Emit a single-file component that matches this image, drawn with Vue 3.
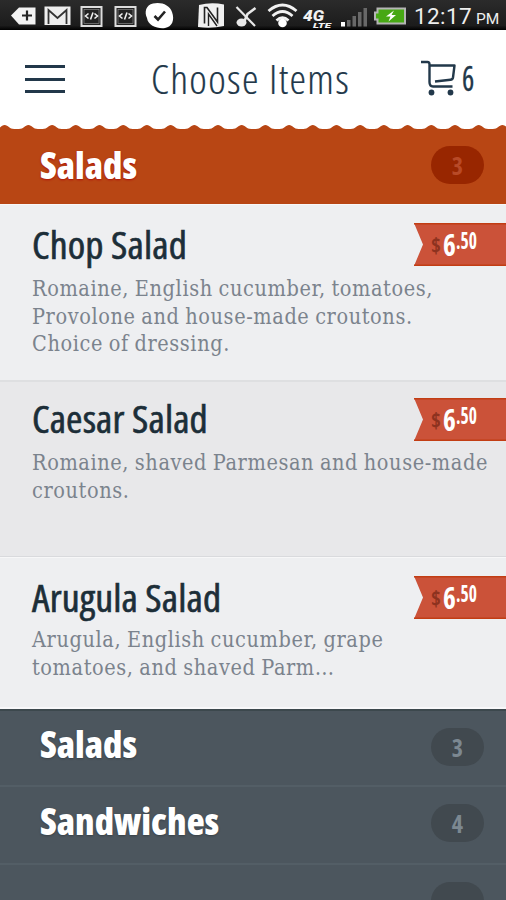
<template>
    <div class="screen">
        <div class="status-bar">
            <svg class="status-icons" viewBox="0 0 410 30" width="410" height="30" fill="none">
                <path d="M11 15.500L19 7.500H35.500V24.500H19Z" fill="#f2f2f2" />
                <path d="M22 15.500H32M27 10.500V20.500" stroke="#222" stroke-width="2.200" />
                <rect x="44.500" y="6.500" width="26" height="18.500" fill="#eee" />
                <path d="M48.500 24V10L57.500 18L66.500 10V24" stroke="#333" stroke-width="1.800" />
                <g v-for="x in [80.5, 114.5]" :key="x" :transform="`translate(${x} 6)`">
                    <rect x="1" y="1" width="20" height="19" fill="#222" stroke="#ddd" stroke-width="2" />
                    <rect x="3.500" y="3.500" width="15" height="14" stroke="#999" stroke-width="0.600" />
                    <path d="M8 7.500L5 10L8 12.500M14 7.500L17 10L14 12.500M12.500 6.500L10 13.500" stroke="#eee" stroke-width="1.600" />
                </g>
                <path d="M153 3.500C161 1.500 170 5 172 12C175 20 172 27 165 28C158 29 148 26 147 18C144 12 146 5 153 3.500Z"
                    fill="#fff" />
                <path d="M154.500 16L158 19.500L165 11.500" stroke="#222" stroke-width="2.600" />
                <path d="M199 5Q211 2 224 4.500V26Q211 29 198 27Z" fill="#f0f0f0" />
                <path d="M204.500 23.500V7.500H207L217.500 22V7.500" stroke="#222" stroke-width="1.600" />
                <path d="M208.500 26V14L217 26" stroke="#222" stroke-width="1.400" />
                <path d="M236.500 7L255 26" stroke="#e8e8e8" stroke-width="2.200" />
                <path d="M244.500 21L247.500 14L255.500 8" stroke="#e8e8e8" stroke-width="2.600" />
                <ellipse cx="241.500" cy="22.500" rx="5" ry="4" fill="#e8e8e8" />
                <g stroke="#f2f2f2" stroke-width="2.800">
                    <path d="M268.500 11Q282.500 -1 296.500 11" />
                    <path d="M272.500 16Q282.500 7 292.500 16" />
                    <path d="M276.500 20.500Q282.500 15 288.500 20.500" />
                </g>
                <circle cx="282.500" cy="23" r="4.300" fill="#fff" />
                <text x="303" y="20.500" class="net net-4g" textLength="21" lengthAdjust="spacingAndGlyphs">4G</text>
                <text x="313" y="28" class="net net-lte" textLength="18" lengthAdjust="spacingAndGlyphs">LTE</text>
                <rect x="341" y="22" width="4" height="4.500" fill="#fff" />
                <g fill="#686868">
                    <rect x="347" y="20" width="3.500" height="6.500" />
                    <rect x="352.500" y="16" width="3.500" height="10.500" />
                    <rect x="358" y="12" width="3.500" height="14.500" />
                    <rect x="363.500" y="8" width="3.500" height="18.500" />
                </g>
                <path d="M377.500 8.500H405V23.500H377.500V19.500H375V12.500H377.500Z" fill="#47a814" stroke="#b5b5b5"
                    stroke-width="2" />
                <path d="M394 10.500L386 16.500H390.500L388.500 21.500L396 15H391.500Z" fill="#fff" />
            </svg>
            <div class="clock"><span class="time">12:17</span><span class="meridiem">PM</span></div>
        </div>

        <header class="nav">
            <button class="menu-button" aria-label="Menu">
                <span></span>
                <span></span>
                <span></span>
            </button>
            <h1 class="title">Choose Items</h1>
            <div class="cart">
                <svg viewBox="0 0 36 36" width="36" height="36" fill="none" stroke="#22384a" stroke-width="2.400"
                    stroke-linejoin="round">
                    <path d="M1 2H7.500Q9.500 2 9.500 4.500V22Q9.500 26.500 13 26.500H32.500" />
                    <path d="M9.500 5.500H34.500L33 17.500Q32.700 19.500 30.500 19.700L15 21.500" />
                    <circle cx="11.500" cy="32.500" r="2.900" fill="#22384a" stroke="none" />
                    <circle cx="30.500" cy="32.500" r="2.900" fill="#22384a" stroke="none" />
                </svg>
                <span class="cart-count">{{ cartCount }}</span>
            </div>
        </header>

        <section class="category category-open">
            <svg class="scallop" width="506" height="6" viewBox="0 0 506 6">
                <path :d="scallopPath" fill="#b84614" />
            </svg>
            <h2 class="category-name">Salads</h2>
            <span class="count"><b>3</b></span>
        </section>

        <article v-for="item in items" :key="item.name" :class="['item', item.modifier]">
            <h3 class="item-name">{{ item.name }}</h3>
            <p class="item-description">
                <span v-for="line in item.lines" :key="line">{{ line }}</span>
            </p>
            <div class="price">
                <svg class="ribbon" width="92" height="44" viewBox="0 0 92 44">
                    <path d="M0 0H92V43H0L9 21.500Z" fill="#cb5239" />
                    <path d="M0 0.800H92M0 42.200H92" stroke="#c23d14" stroke-width="1.600" />
                </svg>
                <span class="currency">$</span>
                <span class="dollars">6</span>
                <span class="cents">.50</span>
            </div>
        </article>

        <section v-for="category in categories" :key="category.name" class="category category-closed">
            <h2 class="category-name">{{ category.name }}</h2>
            <span class="count"><b>{{ category.count }}</b></span>
        </section>
    </div>
</template>

<script setup>
const cartCount = 6

const items = [
    {
        name: 'Chop Salad',
        modifier: 'item-first',
        lines: ['Romaine, English cucumber, tomatoes,', 'Provolone and house-made croutons.', 'Choice of dressing.']
    },
    {
        name: 'Caesar Salad',
        modifier: 'item-shaded',
        lines: ['Romaine, shaved Parmesan and house-made', 'croutons.']
    },
    {
        name: 'Arugula Salad',
        modifier: 'item-last',
        lines: ['Arugula, English cucumber, grape', 'tomatoes, and shaved Parm…']
    }
]

const categories = [
    { name: 'Salads', count: 3 },
    { name: 'Sandwiches', count: 4 },
    { name: '', count: '' }
]

// Wavy top edge of the open category, one bump every 23.7px
const step = 23.7
let scallopPath = 'M-19 6V5'
for (let i = 0; i < 23; i++) {
    const x = i * step - 28.5
    scallopPath += `L${x} 5C${x + 5} 5 ${x + 6} 1 ${x + 9.5} 1S${x + 14} 5 ${x + 19} 5`
}
scallopPath += 'V6Z'
</script>

<style>
body {
    margin: 0;
    overflow: hidden;
}
</style>

<style scoped>
.screen {
    width: 506px;
    height: 900px;
    overflow: hidden;
    background: #eeeff1;
    font-family: "Open Sans", "Noto Sans", sans-serif;
}

.status-bar {
    height: 30px;
    display: flex;
    background: linear-gradient(#2b2b2b, #1c1c1c 85%, #000);
    color: #eee;
}

.status-icons {
    flex-shrink: 0;
}

.net {
    fill: #f2f2f2;
    font-family: Roboto, sans-serif;
    font-style: italic;
    font-weight: 900;
}

.net-4g {
    font-size: 15px;
}

.net-lte {
    font-size: 8px;
}

.clock {
    display: flex;
    align-items: baseline;
    gap: 4px;
    padding-left: 4px;
    font-family: Roboto, sans-serif;
    line-height: 32px;
}

.time {
    font-size: 22.5px;
    letter-spacing: 0.4px;
}

.meridiem {
    font-size: 15.5px;
}

.nav {
    height: 94px;
    display: flex;
    align-items: center;
    background: #fff;
    color: #22384a;
}

.menu-button {
    width: 40px;
    height: 28px;
    margin: 4px 0 0 25px;
    padding: 0;
    display: flex;
    flex-direction: column;
    justify-content: space-between;
    border: none;
    background: none;
}

.menu-button span {
    height: 3px;
    background: #22384a;
}

.title {
    width: 260px;
    margin: 4px 0 0 86px;
    font-size: 40px;
    line-height: 50px;
    font-weight: 300;
    font-stretch: 75%;
    letter-spacing: 1.3px;
    white-space: nowrap;
    transform: scaleX(1.045);
    transform-origin: left;
    -webkit-text-stroke: 0.2px;
}

.cart {
    display: flex;
    align-items: center;
    gap: 5px;
    margin: 2px 0 0 9px;
}

.cart-count {
    font-size: 34px;
    line-height: 36px;
    font-weight: 400;
    font-stretch: 75%;
    transform: scaleX(0.85);
    -webkit-text-stroke: 0.3px;
}

.category {
    position: relative;
    display: flex;
    justify-content: space-between;
    box-sizing: border-box;
    padding: 0 22px 0 40px;
    color: #fff;
}

.category-open {
    height: 75px;
    margin-top: 5px;
    background: #b84614;
}

.scallop {
    position: absolute;
    top: -5px;
    left: 0;
    background: #fff;
}

.category-name {
    margin: 0;
    font-size: 37px;
    line-height: 40px;
    font-weight: 800;
    font-stretch: 75%;
    white-space: nowrap;
    text-shadow: 0 1px 2px rgba(20, 25, 30, 0.35);
}

.category-open .category-name {
    margin-top: 16px;
    text-shadow: 0 1px 2px #ae1008;
}

.count {
    width: 53px;
    height: 38px;
    border-radius: 19px;
    display: flex;
    align-items: center;
    justify-content: center;
    font-size: 24px;
}

.count b {
    font-stretch: 75%;
}

.category-open .count {
    margin-top: 17px;
    background: #982600;
    color: #b84a27;
}

.item {
    position: relative;
    box-sizing: border-box;
    padding-left: 32px;
    border-top: 1px solid #f7f7f8;
}

.item-first {
    height: 176px;
    padding-top: 20px;
}

.item-shaded {
    height: 177px;
    padding-top: 17px;
    background: #e8e8ea;
    border-top: 2px solid #dedfe1;
    border-bottom: 1px solid #d9dadd;
}

.item-last {
    height: 152px;
    padding-top: 20px;
    border-bottom: 2px solid #f8f8fa;
}

.item-name {
    margin: 0;
    color: #1c2e38;
    font-size: 37.5px;
    line-height: 40px;
    font-weight: 400;
    font-stretch: 75%;
    letter-spacing: 0.1px;
    white-space: nowrap;
    transform: scaleX(1.06);
    transform-origin: left;
    -webkit-text-stroke: 0.6px;
}

.item-description {
    margin: 10px 0 0;
    color: #7b838d;
    font-family: "DejaVu Serif", serif;
    font-stretch: condensed;
    font-size: 21.5px;
    line-height: 27.6px;
    letter-spacing: 0.6px;
    word-spacing: -1px;
}

.item-last .item-description {
    margin-top: 8px;
}

.item-description span {
    display: block;
    white-space: nowrap;
}

.price {
    position: absolute;
    top: 18px;
    right: 0;
    width: 92px;
    height: 44px;
    display: flex;
    color: #fff;
    font-weight: 700;
    font-stretch: 75%;
}

.item-shaded .price {
    top: 16px;
}

.item-last .price {
    top: 18px;
}

.ribbon {
    position: absolute;
    inset: 0;
}

.price span {
    position: relative;
    transform-origin: left;
}

.currency {
    width: 12px;
    margin-left: 17px;
    color: #8d321f;
    font-size: 21px;
    line-height: 44px;
}

.dollars {
    width: 13px;
    font-size: 31px;
    line-height: 42px;
    transform: scaleX(0.88);
}

.cents {
    font-size: 23px;
    line-height: 34px;
    transform: scaleX(0.76);
}

.category-closed {
    height: 78px;
    background: #4c565e;
    border-top: 2px solid #535e66;
}

.item + .category-closed {
    height: 76px;
    border-top-color: #3c484d;
}

.category-closed .category-name {
    margin-top: 14px;
}

.item + .category-closed .category-name {
    margin-top: 13px;
}

.category-closed .count {
    margin-top: 17px;
    background: #41494f;
    color: #7c8891;
}
</style>
